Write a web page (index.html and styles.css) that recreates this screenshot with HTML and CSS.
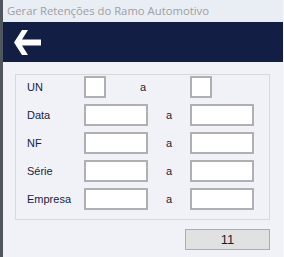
FILE: index.html
```html
<!DOCTYPE html>
<html lang="pt">
<head>
    <meta charset="UTF-8">
    <title>Gerar Retenções do Ramo Automotivo</title>
    <link rel="stylesheet" href="styles.css">
</head>
<body>
    <div class="window">
        <div class="titlebar">Gerar Retenções do Ramo Automotivo</div>
        <div class="header">
            <svg class="back" width="28" height="25" viewBox="0 0 28 25">
                <polygon points="0,12.5 8,0 14,0 8,9.5 27,9.5 27,15.5 8,15.5 14,25 8,25" fill="#fff"/>
            </svg>
        </div>
        <div class="content">
            <div class="filters">
                <div class="row short">
                    <span class="label">UN</span>
                    <span class="field"></span>
                    <span class="sep">a</span>
                    <span class="field"></span>
                </div>
                <div class="row">
                    <span class="label">Data</span>
                    <span class="field"></span>
                    <span class="sep">a</span>
                    <span class="field"></span>
                </div>
                <div class="row">
                    <span class="label">NF</span>
                    <span class="field"></span>
                    <span class="sep">a</span>
                    <span class="field"></span>
                </div>
                <div class="row">
                    <span class="label">Série</span>
                    <span class="field"></span>
                    <span class="sep">a</span>
                    <span class="field"></span>
                </div>
                <div class="row">
                    <span class="label">Empresa</span>
                    <span class="field"></span>
                    <span class="sep">a</span>
                    <span class="field"></span>
                </div>
            </div>
            <div class="actions">
                <div class="button">11</div>
            </div>
        </div>
    </div>
</body>
</html>
```

FILE: styles.css
```css
body {
    margin: 0;
    background-color: #f0f2f8;
}

.window {
    display: flex;
    flex-direction: column;
    height: 257px;
    border-left: 3px solid #50565e;
    border-right: 1px solid #f8f9fc;
    box-sizing: border-box;
}

.titlebar {
    height: 22px;
    padding-left: 4px;
    background-color: #e9edf4;
    color: #a0a0a0;
    font-family: "Open Sans", sans-serif;
    font-size: 11.3px;
    line-height: 22px;
}

.header {
    height: 40px;
    background-color: #131e45;
    display: flex;
    align-items: center;
    padding-left: 11px;
}

.content {
    flex: 1;
    padding: 12px 13px 0 12px;
    background-color: #f0f2f8;
}

.filters {
    border: 1px solid #d8d9dd;
    padding: 1px 0 9px 11px;
    display: flex;
    flex-direction: column;
    gap: 6px;
}

.row {
    display: flex;
    align-items: center;
    height: 22px;
    font-family: "Liberation Sans", Arial, sans-serif;
    font-size: 11px;
    color: #1c1d3c;
}

.label {
    width: 57px;
}

.field {
    width: 64px;
    height: 22px;
    box-sizing: border-box;
    border: 2px solid #b0b0b4;
    background-color: #fff;
}

.sep {
    width: 42px;
    box-sizing: border-box;
    padding-left: 18px;
}

.short .field {
    width: 22px;
}

.short .sep {
    width: 84px;
    padding-left: 34px;
}

.actions {
    display: flex;
    justify-content: flex-end;
    padding-top: 9px;
}

.button {
    width: 85px;
    height: 21px;
    box-sizing: border-box;
    border: 1px solid #adadad;
    background-color: #e1e1e1;
    font-family: "Liberation Sans", Arial, sans-serif;
    font-size: 13px;
    color: #1c1d3c;
    text-align: center;
    line-height: 19px;
}
```
